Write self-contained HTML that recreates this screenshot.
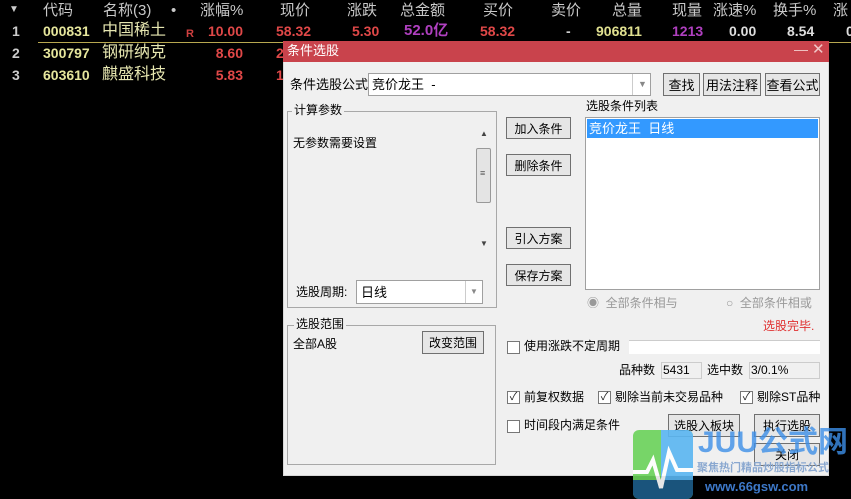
<!DOCTYPE html>
<html><head><meta charset="utf-8"><style>
*{margin:0;padding:0;box-sizing:border-box}
body{width:851px;height:499px;background:#000;position:relative;overflow:hidden;font-family:"Liberation Sans","Noto Sans CJK SC",sans-serif}
.t{position:absolute;white-space:nowrap;line-height:1}
.h{color:#c8c8c8;font-size:15px;top:3px}
.n{font-size:14px;font-weight:bold}
.r{text-align:right}
.d{font-size:12px;color:#000}
.btn{position:absolute;background:#e6e6e6;border:1px solid #707070;font-size:12px;color:#000;text-align:center;display:flex;align-items:center;justify-content:center}
.box{position:absolute;background:#fff;border:1px solid #a0a0a0}
.grp{position:absolute;border:1px solid #a8a8a8}
.cb{position:absolute;width:13px;height:13px;border:1px solid #777;background:#fff;font-size:11px;line-height:11px;text-align:center;color:#222}
</style></head><body>
<!-- header -->
<div class="t" style="left:9px;top:5px;color:#ccc;font-size:10px">▼</div>
<div class="t h" style="left:43px">代码</div>
<div class="t h" style="left:103px">名称(3)</div>
<div class="t h" style="left:171px">•</div>
<div class="t h" style="left:200px">涨幅%</div>
<div class="t h" style="left:280px">现价</div>
<div class="t h" style="left:347px">涨跌</div>
<div class="t h" style="left:400px">总金额</div>
<div class="t h" style="left:483px">买价</div>
<div class="t h" style="left:551px">卖价</div>
<div class="t h" style="left:612px">总量</div>
<div class="t h" style="left:672px">现量</div>
<div class="t h" style="left:713px">涨速%</div>
<div class="t h" style="left:773px">换手%</div>
<div class="t h" style="left:833px">涨</div>
<!-- rows -->
<div class="t n" style="left:12px;top:24px;color:#ccc">1</div>
<div class="t n" style="left:12px;top:46px;color:#ccc">2</div>
<div class="t n" style="left:12px;top:68px;color:#ccc">3</div>
<div class="t n" style="left:43px;top:24px;color:#e6e69c">000831</div>
<div class="t n" style="left:43px;top:46px;color:#e6e69c">300797</div>
<div class="t n" style="left:43px;top:68px;color:#e6e69c">603610</div>
<div class="t" style="left:102px;top:23px;color:#e6e6b0;font-size:16px">中国稀土</div>
<div class="t" style="left:102px;top:45px;color:#e6e6b0;font-size:16px">钢研纳克</div>
<div class="t" style="left:102px;top:67px;color:#e6e6b0;font-size:16px">麒盛科技</div>
<div class="t" style="left:186px;top:29px;color:#d04040;font-size:11px;font-weight:bold">R</div>
<div class="t n r" style="right:608px;top:24px;color:#e04848">10.00</div>
<div class="t n r" style="right:608px;top:46px;color:#e04848">8.60</div>
<div class="t n r" style="right:608px;top:68px;color:#e04848">5.83</div>
<div class="t n" style="left:276px;top:24px;color:#e04848">58.32</div>
<div class="t n" style="left:276px;top:46px;color:#e04848">2</div>
<div class="t n" style="left:276px;top:68px;color:#e04848">1</div>
<div class="t n" style="left:352px;top:24px;color:#e04848">5.30</div>
<div class="t" style="left:404px;top:23px;color:#b040c0;font-size:15px;font-weight:bold">52.0亿</div>
<div class="t n" style="left:480px;top:24px;color:#e04848">58.32</div>
<div class="t n" style="left:566px;top:24px;color:#ccc">-</div>
<div class="t n" style="left:596px;top:24px;color:#e0e090">906811</div>
<div class="t n" style="left:672px;top:24px;color:#b040c0">1213</div>
<div class="t n" style="left:729px;top:24px;color:#ddd">0.00</div>
<div class="t n" style="left:787px;top:24px;color:#ddd">8.54</div>
<div class="t n" style="left:846px;top:24px;color:#ddd">0</div>
<div style="position:absolute;left:38px;top:42px;width:813px;height:1px;background:#b8a850"></div>
<!-- dialog -->
<div style="position:absolute;left:283px;top:41px;width:546px;height:435px;background:#f0f0f0;border:1px solid #d8d8d8"></div>
<div style="position:absolute;left:283px;top:41px;width:546px;height:21px;background:#c9434c"></div>
<div class="t" style="left:287px;top:44px;color:#fff;font-size:13px">条件选股</div>
<div class="t" style="left:794px;top:42px;color:#f0c8c8;font-size:14px">—</div>
<div class="t" style="left:812px;top:42px;color:#f0c8c8;font-size:15px">✕</div>

<div class="t d" style="left:290px;top:78px;font-size:13px">条件选股公式</div>
<div class="box" style="left:368px;top:73px;width:283px;height:23px"></div>
<div class="t d" style="left:372px;top:78px;font-size:13px">竞价龙王 &nbsp;-</div>
<div style="position:absolute;left:632px;top:74px;width:1px;height:21px;background:#ccc"></div>
<div class="t" style="left:638px;top:80px;color:#888;font-size:9px">▼</div>
<div class="btn" style="left:663px;top:73px;width:37px;height:23px;font-size:13px">查找</div>
<div class="btn" style="left:703px;top:73px;width:58px;height:23px;font-size:13px">用法注释</div>
<div class="btn" style="left:765px;top:73px;width:55px;height:23px;font-size:13px">查看公式</div>

<div class="grp" style="left:287px;top:111px;width:210px;height:197px"></div>
<div class="t d" style="left:292px;top:104px;background:#f0f0f0;padding:0 2px">计算参数</div>
<div class="t d" style="left:293px;top:137px">无参数需要设置</div>
<div style="position:absolute;left:476px;top:127px;width:15px;height:123px;background:#f0f0f0"></div>
<div class="t" style="left:480px;top:130px;font-size:8px;color:#444">▲</div>
<div class="t" style="left:480px;top:240px;font-size:8px;color:#444">▼</div>
<div style="position:absolute;left:476px;top:148px;width:15px;height:55px;background:#e4e4e4;border:1px solid #999;border-radius:2px"></div>
<div class="t" style="left:480px;top:169px;font-size:9px;color:#555">≡</div>
<div class="t d" style="left:296px;top:286px">选股周期:</div>
<div class="box" style="left:356px;top:280px;width:127px;height:24px"></div>
<div class="t d" style="left:361px;top:286px;font-size:13px">日线</div>
<div style="position:absolute;left:465px;top:281px;width:1px;height:22px;background:#ccc"></div>
<div class="t" style="left:470px;top:288px;color:#888;font-size:8px">▼</div>

<div class="btn" style="left:506px;top:117px;width:65px;height:22px">加入条件</div>
<div class="btn" style="left:506px;top:154px;width:65px;height:22px">删除条件</div>
<div class="btn" style="left:506px;top:227px;width:65px;height:22px">引入方案</div>
<div class="btn" style="left:506px;top:264px;width:65px;height:22px">保存方案</div>

<div class="t d" style="left:586px;top:100px">选股条件列表</div>
<div class="box" style="left:585px;top:117px;width:235px;height:173px"></div>
<div style="position:absolute;left:587px;top:119px;width:231px;height:19px;background:#3399ff"></div>
<div class="t" style="left:589px;top:122px;color:#fff;font-size:13px">竞价龙王 &nbsp;日线</div>

<div class="t" style="left:587px;top:297px;color:#999;font-size:12px">◉ &nbsp;全部条件相与</div>
<div class="t" style="left:726px;top:297px;color:#999;font-size:12px">○ &nbsp;全部条件相或</div>
<div class="t" style="left:763px;top:320px;color:#e03030;font-size:12px">选股完毕.</div>

<div class="cb" style="left:507px;top:341px"></div>
<div class="t d" style="left:524px;top:340px">使用涨跌不定周期</div>
<div style="position:absolute;left:629px;top:340px;width:191px;height:14px;background:#fff;border-top:1px solid #ccc"></div>
<div class="t d" style="left:619px;top:364px">品种数</div>
<div style="position:absolute;left:661px;top:362px;width:41px;height:17px;border:1px solid #ccc"></div>
<div class="t d" style="left:663px;top:364px">5431</div>
<div class="t d" style="left:707px;top:364px">选中数</div>
<div style="position:absolute;left:749px;top:362px;width:71px;height:17px;border:1px solid #ccc"></div>
<div class="t d" style="left:751px;top:364px">3/0.1%</div>

<div class="cb" style="left:507px;top:391px">✓</div>
<div class="t d" style="left:524px;top:391px">前复权数据</div>
<div class="cb" style="left:598px;top:391px">✓</div>
<div class="t d" style="left:615px;top:391px">剔除当前未交易品种</div>
<div class="cb" style="left:740px;top:391px">✓</div>
<div class="t d" style="left:757px;top:391px">剔除ST品种</div>
<div class="cb" style="left:507px;top:420px"></div>
<div class="t d" style="left:524px;top:419px">时间段内满足条件</div>
<div class="btn" style="left:668px;top:414px;width:72px;height:23px">选股入板块</div>
<div class="btn" style="left:754px;top:414px;width:66px;height:23px">执行选股</div>
<div class="btn" style="left:754px;top:443px;width:66px;height:23px">关闭</div>

<div class="grp" style="left:287px;top:325px;width:209px;height:140px"></div>
<div class="t d" style="left:294px;top:318px;background:#f0f0f0;padding:0 2px">选股范围</div>
<div class="t d" style="left:293px;top:338px">全部A股</div>
<div class="btn" style="left:422px;top:331px;width:62px;height:23px">改变范围</div>

<!-- watermark logo -->
<div style="position:absolute;left:633px;top:430px;width:60px;height:69px;border-radius:6px;overflow:hidden;background:#6bd35a;opacity:.9">
 <div style="position:absolute;left:28px;top:0;width:32px;height:50px;background:#5ab6f2"></div>
 <div style="position:absolute;left:0;top:50px;width:60px;height:19px;background:#1d5e8a"></div>
 <svg width="60" height="69" style="position:absolute;left:0;top:0"><path d="M0 42 L14 42 L20 30 L28 58 L36 22 L44 40 L60 40" stroke="#fff" stroke-width="4" fill="none"/></svg>
</div>
<div class="t" style="left:698px;top:428px;color:#3d8fe8;font-size:30px;font-weight:bold;opacity:.8">JUU公式网</div>
<div class="t" style="left:697px;top:463px;color:#8aa8d0;font-size:11px;font-weight:bold">聚焦热门精品炒股指标公式</div>
<div class="t" style="left:705px;top:480px;color:#3d78c8;font-size:13px;font-weight:bold">www.66gsw.com</div>
</body></html>
